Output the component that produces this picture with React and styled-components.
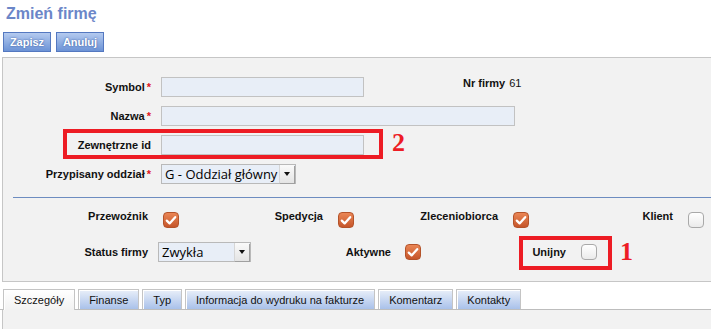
import React from "react";
import styled, { createGlobalStyle } from "styled-components";

const GlobalStyle = createGlobalStyle`
  body {
    margin: 0;
    background: #fff;
    font-family: "Liberation Sans", Arial, sans-serif;
    color: #111;
  }
`;

const Page = styled.div`
  width: 711px;
  height: 329px;
  overflow: hidden;
`;

const Title = styled.h1`
  margin: 0;
  padding: 4px 0 0 6px;
  font-size: 16px;
  line-height: 19px;
  font-weight: bold;
  color: #6b86c8;
`;

const Toolbar = styled.div`
  display: flex;
  gap: 5px;
  margin-top: 9px;
  padding-left: 3px;
`;

const Button = styled.button`
  width: 48px;
  height: 20px;
  padding: 0;
  border: 1px solid #5478c0;
  background: linear-gradient(#b4caef, #6c93d6);
  color: #fff;
  font-family: "Liberation Sans", Arial, sans-serif;
  font-size: 11px;
  font-weight: 700;
  text-shadow: 0 0 2px #2f5196;
`;

const Panel = styled.div`
  margin-top: 5px;
  margin-left: 2px;
  border: 1px solid #c6c6c6;
  border-right: none;
  background: #f2f2f2;
  padding: 19px 0 19px 0;
`;

const FormRow = styled.div`
  position: relative;
  display: flex;
  align-items: center;
  height: 20px;
  & + & {
    margin-top: 9px;
  }
`;

const FieldLabel = styled.label`
  flex-shrink: 0;
  width: ${(p) => p.width || 148}px;
  margin-right: ${(p) => p.gap ?? 10}px;
  text-align: right;
  font-size: 11px;
  line-height: 13px;
  font-weight: bold;
`;

const Required = styled.span`
  color: #e0161e;
  margin-left: 2px;
`;

const TextInput = styled.div`
  box-sizing: border-box;
  width: ${(p) => p.width}px;
  height: 20px;
  border: 1px solid #c2c2c2;
  background: #e8eef7;
`;

const SelectBox = styled.div`
  box-sizing: border-box;
  display: flex;
  align-items: center;
  width: ${(p) => p.width}px;
  height: 20px;
  border: 1px solid #b9b9b9;
  background: #e8eef7;
  font-family: "Open Sans", sans-serif;
  font-size: 13px;
  color: #000;
`;

const SelectValue = styled.span`
  flex: 1;
  padding-left: 3px;
  white-space: nowrap;
  overflow: hidden;
`;

const SelectArrow = styled.span`
  box-sizing: border-box;
  display: flex;
  align-items: center;
  justify-content: center;
  width: 15px;
  height: 18px;
  margin-right: 1px;
  border-left: 1px solid #d6d6d6;
  background: linear-gradient(#fafafa, #e4e4e4);
  box-shadow: 1px 1px 0 #a0a0a0;
  &::after {
    content: "";
    border-left: 3px solid transparent;
    border-right: 3px solid transparent;
    border-top: 4px solid #111;
  }
`;

const NrFirmy = styled.div`
  align-self: flex-start;
  margin-left: 99px;
  font-size: 11px;
  line-height: 13px;
  b {
    margin-right: 4px;
  }
`;

const Frame = styled.div`
  position: absolute;
  box-sizing: border-box;
  left: ${(p) => p.left}px;
  top: ${(p) => p.top}px;
  width: ${(p) => p.width}px;
  height: ${(p) => p.height}px;
  border: 4px solid #ed1c24;
  pointer-events: none;
`;

const Marker = styled.span`
  position: absolute;
  left: ${(p) => p.left}px;
  top: ${(p) => p.top}px;
  font-family: "Liberation Serif", "Times New Roman", serif;
  font-weight: bold;
  font-size: 26px;
  line-height: 26px;
  color: #ed1c24;
`;

const Separator = styled.hr`
  margin: 13px 0 0 10px;
  border: none;
  height: 1px;
  background: #6d8cc0;
`;

const CheckGrid = styled.div`
  display: grid;
  grid-template-columns: 145px 27px 148px 27px 148px 27px 148px 27px;
  align-items: start;
  margin-top: 12px;
`;

const CheckLabel = styled.span`
  text-align: right;
  font-size: 11px;
  line-height: 13px;
  font-weight: bold;
`;

const Check = styled.span`
  box-sizing: border-box;
  display: flex;
  align-items: center;
  justify-content: center;
  width: 16px;
  height: 16px;
  margin-left: ${(p) => p.offset ?? 15}px;
  margin-top: ${(p) => p.top ?? 2}px;
  border-radius: 4px;
  border: 1px solid ${(p) => (p.checked ? "#b4532a" : "#a9a9a9")};
  background: ${(p) =>
    p.checked
      ? "linear-gradient(#ea8655, #c6562b)"
      : "linear-gradient(#ffffff, #ebebeb)"};
`;

const StatusRow = styled.div`
  display: flex;
  align-items: center;
  height: 20px;
  margin-top: 14px;
`;

const MarkedGroup = styled.div`
  position: relative;
  display: flex;
  align-items: center;
  margin-left: ${(p) => p.offset}px;
`;

const TabStrip = styled.div`
  display: flex;
  align-items: flex-end;
  gap: 3px;
  margin-top: 7px;
  padding-left: 3px;
  height: 20px;
  border-bottom: 1px solid #bdbdbd;
`;

const Tab = styled.div`
  box-sizing: border-box;
  height: ${(p) => (p.active ? 21 : 20)}px;
  margin-bottom: ${(p) => (p.active ? -1 : 0)}px;
  padding: 0 10px;
  display: flex;
  align-items: center;
  border: 1px solid #c4c4c4;
  border-bottom: none;
  box-shadow: inset 1px 1px 0 #fff;
  background: ${(p) =>
    p.active
      ? "linear-gradient(#ffffff, #f2f2f2)"
      : "linear-gradient(#e9eff9, #a9c1ea)"};
  font-size: 11px;
  color: #111;
  white-space: nowrap;
`;

const TabBody = styled.div`
  height: 40px;
  margin-left: 2px;
  border-left: 1px solid #c6c6c6;
  background: #f2f2f2;
`;

const Tick = () => (
  <svg width="12" height="11" viewBox="0 0 12 11">
    <path
      d="M1.8 5.6 L4.6 8.4 L10.2 2.2"
      fill="none"
      stroke="#fff"
      strokeWidth="2.3"
      strokeLinecap="round"
      strokeLinejoin="round"
    />
  </svg>
);

const CheckBox = ({ checked, ...rest }) => (
  <Check checked={checked} {...rest}>
    {checked && <Tick />}
  </Check>
);

const flags = [
  { label: "Przewoźnik", checked: true },
  { label: "Spedycja", checked: true },
  { label: "Zleceniobiorca", checked: true },
  { label: "Klient", checked: false },
];

const tabs = [
  "Szczegóły",
  "Finanse",
  "Typ",
  "Informacja do wydruku na fakturze",
  "Komentarz",
  "Kontakty",
];

export default function App() {
  return (
    <Page>
      <GlobalStyle />
      <Title>Zmień firmę</Title>
      <Toolbar>
        <Button>Zapisz</Button>
        <Button>Anuluj</Button>
      </Toolbar>

      <Panel>
        <FormRow>
          <FieldLabel>
            Symbol<Required>*</Required>
          </FieldLabel>
          <TextInput width={203} />
          <NrFirmy>
            <b>Nr firmy</b>61
          </NrFirmy>
        </FormRow>
        <FormRow>
          <FieldLabel>
            Nazwa<Required>*</Required>
          </FieldLabel>
          <TextInput width={354} />
        </FormRow>
        <FormRow>
          <FieldLabel>Zewnętrzne id</FieldLabel>
          <TextInput width={203} />
          <Frame left={60} top={-6} width={320} height={30} />
          <Marker left={389} top={-5}>2</Marker>
        </FormRow>
        <FormRow>
          <FieldLabel>
            Przypisany oddział<Required>*</Required>
          </FieldLabel>
          <SelectBox width={135}>
            <SelectValue>G - Oddział główny</SelectValue>
            <SelectArrow />
          </SelectBox>
        </FormRow>

        <Separator />

        <CheckGrid>
          {flags.map((f) => (
            <React.Fragment key={f.label}>
              <CheckLabel>{f.label}</CheckLabel>
              <CheckBox checked={f.checked} />
            </React.Fragment>
          ))}
        </CheckGrid>

        <StatusRow>
          <FieldLabel width={145}>Status firmy</FieldLabel>
          <SelectBox width={93}>
            <SelectValue>Zwykła</SelectValue>
            <SelectArrow />
          </SelectBox>
          <FieldLabel width={140} gap={0}>
            Aktywne
          </FieldLabel>
          <CheckBox checked offset={14} top={0} />
          <MarkedGroup offset={111}>
            <FieldLabel width={34} gap={0}>
              Unijny
            </FieldLabel>
            <CheckBox offset={15} top={0} />
            <Frame left={-13} top={-8} width={93} height={34} />
            <Marker left={88} top={-5}>1</Marker>
          </MarkedGroup>
        </StatusRow>
      </Panel>

      <TabStrip>
        {tabs.map((t, i) => (
          <Tab key={t} active={i === 0}>
            {t}
          </Tab>
        ))}
      </TabStrip>
      <TabBody />
    </Page>
  );
}
